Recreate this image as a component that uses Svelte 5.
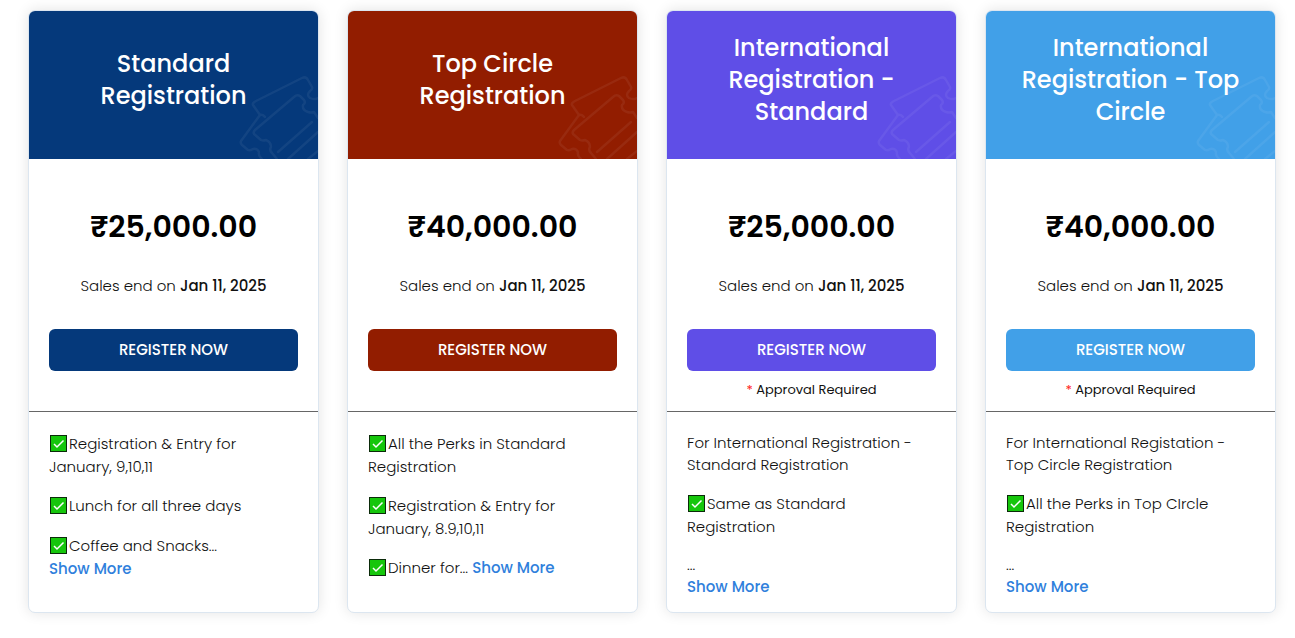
<script>
  const tickets = [
    {
      name: 'Standard Registration',
      price: '₹25,000.00',
      color: '#05397b',
      approval: false,
      items: [
        { check: true, text: 'Registration & Entry for January, 9,10,11' },
        { check: true, text: 'Lunch for all three days' },
        { check: true, text: 'Coffee and Snacks...', breakAfter: true }
      ]
    },
    {
      name: 'Top Circle Registration',
      price: '₹40,000.00',
      color: '#921d00',
      approval: false,
      items: [
        { check: true, text: 'All the Perks in Standard Registration' },
        { check: true, text: 'Registration & Entry for January, 8.9,10,11' },
        { check: true, text: 'Dinner for...' }
      ]
    },
    {
      name: 'International Registration - Standard',
      price: '₹25,000.00',
      color: '#5f4ee7',
      approval: true,
      items: [
        { check: false, text: 'For International Registration - Standard Registration' },
        { check: true, text: 'Same as Standard Registration' },
        { check: false, text: '...', breakAfter: true }
      ]
    },
    {
      name: 'International Registration - Top Circle',
      price: '₹40,000.00',
      color: '#41a0e8',
      approval: true,
      items: [
        { check: false, text: 'For International Registation - Top Circle Registration' },
        { check: true, text: 'All the Perks in Top CIrcle Registration' },
        { check: false, text: '...', breakAfter: true }
      ]
    }
  ];
</script>

<main class="tickets">
  {#each tickets as ticket}
    <article class="card" style="--accent: {ticket.color}">
      <header>
        <h2>{ticket.name}</h2>
        <svg class="art" viewBox="0 0 80 84" aria-hidden="true">
          <path d="M27 42Q25 39 22 40L15 30Q14 28 18 26L64 3Q68 1 70 5L74 12Q75 14 72 16Q68 20 72 23Q76 25 80 23M22 40L3 66Q2 68 4 70L10 75Q12 76 15 74Q19 73 21 77Q20 81 24 84M80 43L76 37Q73 38 70 37Q64 35 65 30Q68 28 66 25L62 21Q59 19 56 22L17 55Q15 57 16 59L23 65Q25 66 28 65Q33 67 33 72Q31 75 34 78L39 84M40 77L74 47M50 84L80 57M70 84L80 76" />
        </svg>
      </header>
      <div class="sale">
        <p class="price">{ticket.price}</p>
        <p class="ends">Sales end on <strong>Jan 11, 2025</strong></p>
        <button type="button">REGISTER NOW</button>
        {#if ticket.approval}
          <p class="approval"><span>*</span> Approval Required</p>
        {/if}
      </div>
      <div class="details">
        {#each ticket.items as item, i}
          <p>
            {#if item.check}<svg class="check" viewBox="0 0 20 24" role="img" aria-label="Included"><rect x="1.5" y="3.5" width="16" height="16" fill="#16c60c" stroke="#0b2b0a" /><path d="M5 12L8 15L14.5 8.5" fill="none" stroke="#fff" stroke-width="1.5" /></svg>{/if}{item.text}
            {#if i === ticket.items.length - 1}
              {#if item.breakAfter}<br />{/if}
              <a href="#details">Show More</a>
            {/if}
          </p>
        {/each}
      </div>
    </article>
  {/each}
</main>

<style>
  :global(body) {
    margin: 0;
    background: #fff;
  }

  .tickets {
    display: grid;
    grid-template-columns: repeat(4, minmax(0, 1fr));
    gap: 28px;
    padding: 10px 19px 24px 28px;
    font-family: Poppins, Inter, sans-serif;
    color: #111;
  }

  .card {
    display: flex;
    flex-direction: column;
    overflow: hidden;
    border: 1px solid #dce6f0;
    border-radius: 7px;
    background: #fff;
    box-shadow: 0 0 14px rgba(0, 0, 0, 0.11);
  }

  header {
    position: relative;
    display: flex;
    align-items: center;
    justify-content: center;
    box-sizing: border-box;
    min-height: 148px;
    padding: 20px 30px 30px;
    background: var(--accent);
  }

  h2 {
    margin: 0;
    color: #fff;
    font-size: 24px;
    font-weight: 500;
    line-height: 32px;
    text-align: center;
  }

  .art {
    position: absolute;
    right: 0;
    bottom: 0;
    width: 80px;
    height: 84px;
    fill: none;
    stroke: rgba(255, 255, 255, 0.06);
    stroke-width: 2.5;
    stroke-linecap: round;
    stroke-linejoin: round;
  }

  .sale {
    box-sizing: border-box;
    min-height: 253px;
    padding: 44px 20px 0;
    border-bottom: 1px solid #666;
    text-align: center;
  }

  p {
    margin: 0;
  }

  .price {
    color: #000;
    font-size: 30px;
    font-weight: 600;
    line-height: 48px;
  }

  .ends {
    margin: 24px 0 32px;
    font-size: 15px;
    font-weight: 300;
    line-height: 22px;
  }

  .ends strong {
    font-weight: 500;
  }

  button {
    display: block;
    width: 100%;
    height: 42px;
    padding: 0;
    border: 0;
    border-radius: 6px;
    background: var(--accent);
    color: #fff;
    font: 500 15px/22px Poppins, Inter, sans-serif;
    cursor: pointer;
  }

  .approval {
    margin-top: 9px;
    font-size: 13px;
    line-height: 20px;
  }

  .approval span {
    color: #f22;
  }

  .details {
    flex: 1;
    padding: 20px 20px 14px;
    font-size: 15px;
    font-weight: 300;
    line-height: 22px;
  }

  .details p + p {
    margin-top: 16px;
  }

  .check {
    width: 20px;
    height: 24px;
    vertical-align: -7px;
  }

  a {
    color: #2f80dc;
    font-weight: 500;
    text-decoration: none;
  }
</style>
